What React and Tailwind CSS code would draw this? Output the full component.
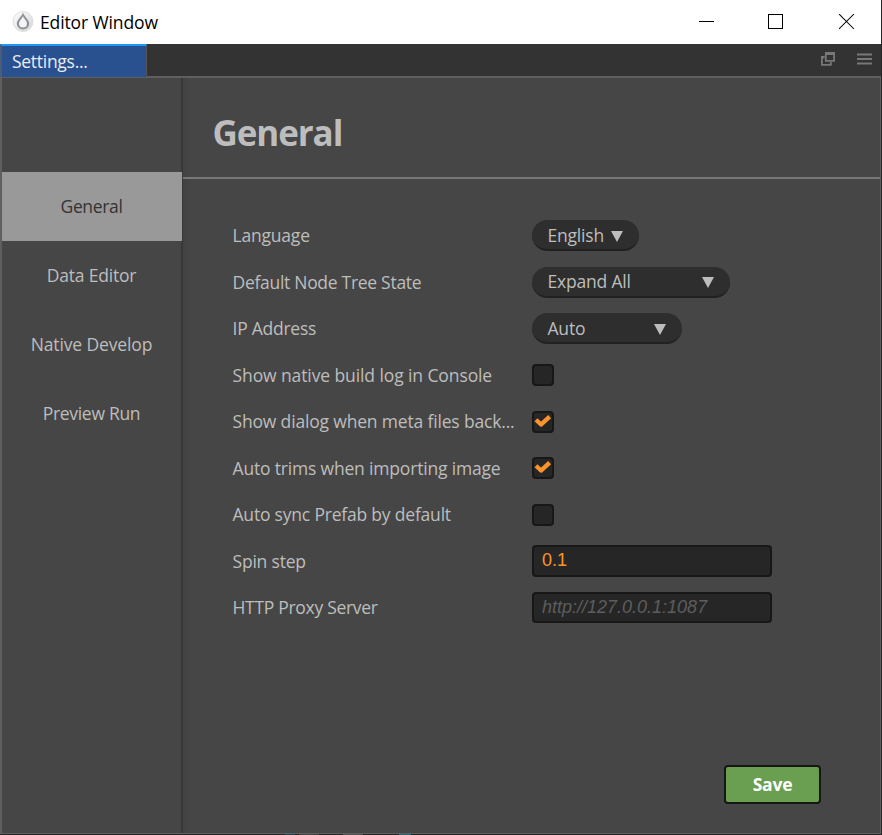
const nav = [
  { label: 'General', cls: 'bg-[#999999] text-[#333333] tracking-[-0.35px] pr-px' },
  { label: 'Data Editor', cls: 'text-[#bdbdbd] tracking-[-0.2px] pr-px' },
  { label: 'Native Develop', cls: 'text-[#bdbdbd] tracking-[-0.12px] pr-px' },
  { label: 'Preview Run', cls: 'text-[#bdbdbd] tracking-[-0.3px] pr-px' },
];

function Row({ label, cls = 'tracking-[-0.2px]', children }) {
  return (
    <div className="flex h-[46.5px] items-center">
      <div className={`w-[299.5px] shrink-0 whitespace-nowrap pb-px text-[17.5px] leading-6 text-[#bdbdbd] ${cls}`}>{label}</div>
      {children}
    </div>
  );
}

function Select({ value, width }) {
  return (
    <div className={`flex h-[31px] items-center justify-between rounded-full border-b-2 border-[#212121] bg-[#2e2e2e] pr-4 pl-[15.5px] text-[17.5px] leading-6 tracking-[-0.2px] text-[#bdbdbd] ${width}`}>
      <span className="whitespace-nowrap">{value}</span>
      <svg className="mt-[3px]" width="12" height="11" viewBox="0 0 12 11"><path d="M0 0H12L6 11Z" fill="#bdbdbd" /></svg>
    </div>
  );
}

function Check({ checked }) {
  return (
    <div className="flex size-[22px] items-center justify-center rounded-[4px] border-2 border-[#171717] bg-[#262626]">
      {checked && (
        <svg width="18" height="18" viewBox="0 0 18 18" fill="none" stroke="#fd942b" strokeWidth="4.2" strokeLinejoin="round">
          <path d="M2 6.8 7 11.6 15.6 3.6" />
        </svg>
      )}
    </div>
  );
}

export default function App() {
  return (
    <div className="flex h-[835px] w-[882px] flex-col overflow-hidden border-r border-[#262626] bg-[#464646] font-['Open_Sans',sans-serif]">
      <header className="flex h-11 shrink-0 items-center bg-white pl-3">
        <svg width="22" height="22" viewBox="0 0 22 22">
          <defs>
            <linearGradient id="disc" x1="0" y1="0" x2="1" y2="1">
              <stop offset="0" stopColor="#ffffff" />
              <stop offset="1" stopColor="#d4d4d4" />
            </linearGradient>
          </defs>
          <circle cx="11" cy="10.5" r="10" fill="url(#disc)" stroke="#dedede" />
          <path d="M11 1.5C10 5.4 4.8 8.6 4.8 12.8a6.2 5.6 0 0 0 12.4 0C17.2 8.6 12 5.4 11 1.5Z" fill="#8d9199" />
          <path d="M11 5C10.4 7.6 7 9.6 7 12.8a4 3.6 0 0 0 8 0C15 9.6 11.6 7.6 11 5Z" fill="#f4f4f4" />
        </svg>
        <span className="ml-1.5 pb-px text-[17.5px] leading-6 tracking-[-0.12px] text-black">Editor Window</span>
        <div className="mr-[26px] ml-auto flex items-center">
          <svg className="mr-[53px]" width="16" height="16" viewBox="0 0 16 16" shapeRendering="crispEdges"><path d="M0 7.5H15" stroke="#000" /></svg>
          <svg className="mr-[55px]" width="16" height="16" viewBox="0 0 16 16" shapeRendering="crispEdges"><path d="M.5 .5H14.5V14.5H.5Z" stroke="#000" fill="none" /></svg>
          <svg width="16" height="16" viewBox="0 0 16 16"><path d="M0 0 15 15M15 0 0 15" stroke="#000" strokeWidth="1.05" /></svg>
        </div>
      </header>
      <div className="flex h-[34px] shrink-0 border-b-2 border-[#5f5f5f] bg-[#333333]">
        <div className="-mb-px h-[33px] w-[147px] border-t-2 border-r border-l-2 border-t-[#2196f3] border-r-[#555555] border-l-[#4b5c78] bg-[#29508f] pl-[10px] text-[17.5px] leading-[31px] tracking-[-0.28px] text-[#e8edf5]">Settings...</div>
        <div className="mr-[9px] ml-auto flex items-center gap-[22px] pb-0.5">
          <svg width="14" height="14" viewBox="0 0 14 14" fill="none" stroke="#787878">
            <path d="M4.8 1.6H13.1V8.9H4.8Z" strokeWidth="1.8" />
            <path d="M4 1.5H14" strokeWidth="3" />
            <path d="M3.5 5H.9V12.9H9.8V10" strokeWidth="1.8" />
            <path d="M0 5.2H3.3" strokeWidth="2.4" />
          </svg>
          <svg width="15" height="12" viewBox="0 0 15 12"><path d="M0 1.5H15M0 6H15M0 10.5H15" stroke="#787878" strokeWidth="1.9" /></svg>
        </div>
      </div>
      <div className="flex h-[756px] shrink-0 border-r border-b border-l-2 border-[#5f5f5f]">
        <nav className="flex w-[180px] shrink-0 flex-col bg-[linear-gradient(to_right,transparent_179px,#383838_179px)] pt-[94px]">
          {nav.map((n) => (
            <div key={n.label} className={`flex h-[69px] items-center justify-center pb-0.5 text-[17.5px] leading-6 ${n.cls}`}>{n.label}</div>
          ))}
        </nav>
        <main className="flex flex-1 flex-col border-l border-[#393939] bg-[linear-gradient(to_right,#414141,#464646_7px)]">
          <div className="flex h-[101px] shrink-0 items-center border-b-2 border-[#777777] pt-2.5 pl-[29.5px]">
            <h1 className="text-[35px] leading-[48px] font-bold tracking-[-1.1px] text-[#bdbdbd]">General</h1>
          </div>
          <div className="pt-[33.25px] pl-[49.5px]">
            <Row label="Language"><Select value="English" width="w-[107px]" /></Row>
            <Row label="Default Node Tree State" cls="tracking-[-0.29px]"><Select value="Expand All" width="w-[198px]" /></Row>
            <Row label="IP Address" cls="tracking-[-0.25px]"><Select value="Auto" width="w-[150px]" /></Row>
            <Row label="Show native build log in Console" cls="tracking-[-0.1px]"><Check /></Row>
            <Row label="Show dialog when meta files back..." cls="tracking-[-0.17px]"><Check checked /></Row>
            <Row label="Auto trims when importing image" cls="tracking-[-0.18px]"><Check checked /></Row>
            <Row label="Auto sync Prefab by default" cls="tracking-[-0.2px]"><Check /></Row>
            <Row label="Spin step">
              <input readOnly value="0.1" className="h-8 w-60 rounded-[4px] border-2 border-[#171717] bg-[#262626] px-2 pb-0.5 font-['Liberation_Sans',sans-serif] text-[18px] text-[#fd942b]" />
            </Row>
            <Row label="HTTP Proxy Server" cls="tracking-[-0.3px]">
              <input readOnly placeholder="http://127.0.0.1:1087" className="h-[31px] w-60 rounded-[4px] border-2 border-[#171717] bg-[#262626] px-2 font-['Liberation_Sans',sans-serif] text-[18px] italic placeholder:text-[#5d5d5d]" />
            </Row>
          </div>
          <button className="mt-auto mr-[59px] mb-[29px] h-[39px] w-[97px] self-end rounded-[4px] border-2 border-[#171717] bg-[#6a9f51] text-[17.5px] font-bold tracking-[-0.2px] text-white">Save</button>
        </main>
      </div>
      <div className="flex h-px shrink-0 bg-[#242424] pl-[285px]">
        <div className="w-2.5 bg-[#244452]" />
        <div className="ml-1 w-5 bg-[#444444]" />
        <div className="ml-6 w-5 bg-[#505050]" />
        <div className="ml-[36px] w-3 bg-[#1c6973]" />
      </div>
    </div>
  );
}
